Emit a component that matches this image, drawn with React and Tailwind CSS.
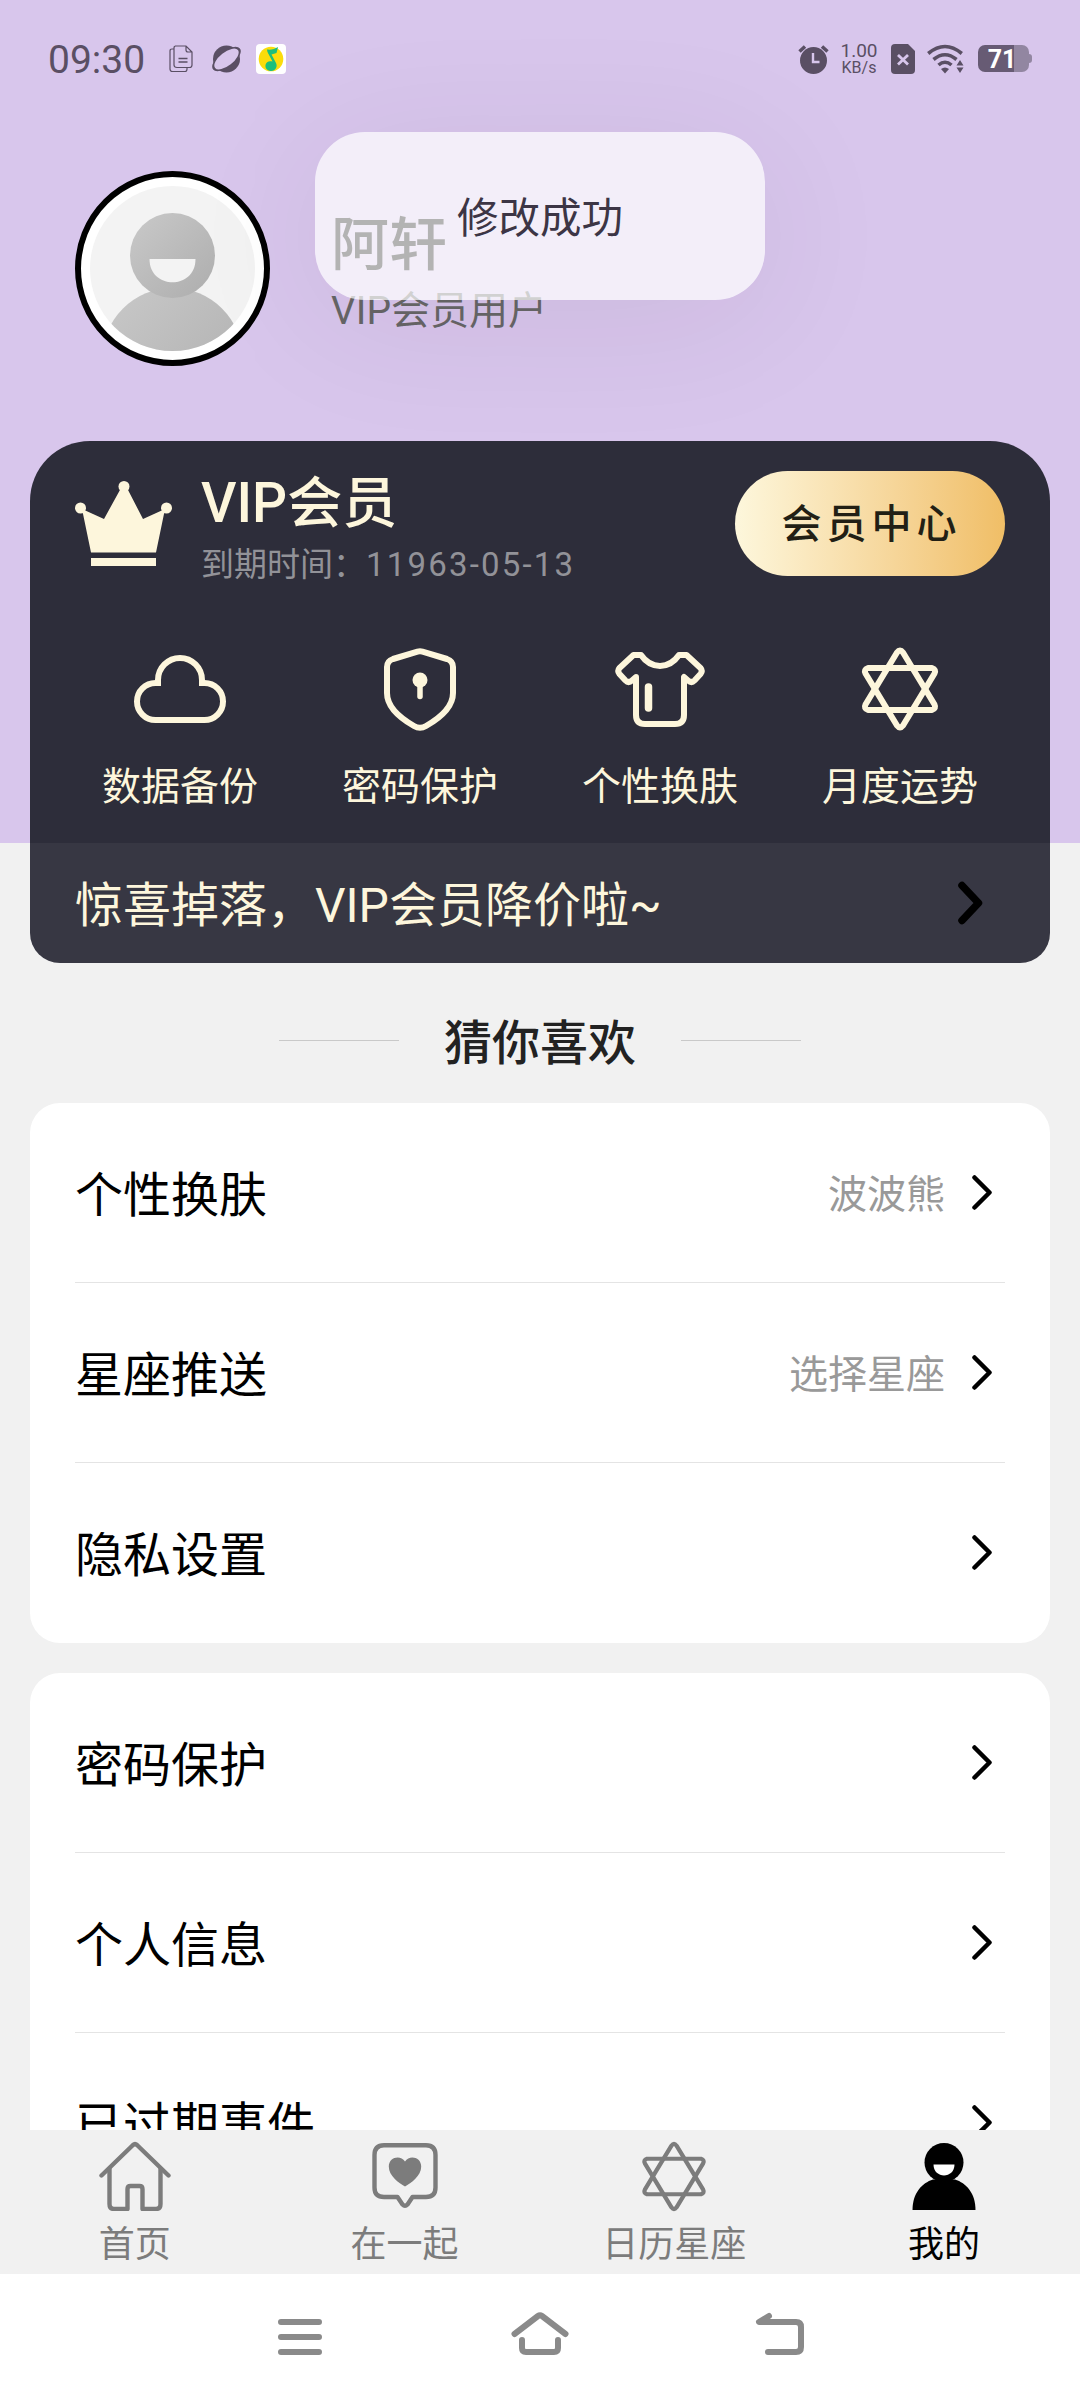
const CREAM = '#fdf6dc';

function CloudIcon() {
  return (
    <svg width="92" height="84" viewBox="0 0 92 84" fill="none" stroke={CREAM} strokeWidth="6">
      <path d="M27 36H21.500a18.500 18.500 0 0 0 0 37h49a18.500 18.500 0 0 0 0-37H65" />
      <path d="M24 39V33a22 22 0 0 1 44 0v6" />
    </svg>
  );
}

function ShieldIcon() {
  return (
    <svg width="74" height="84" viewBox="0 0 74 84" fill="none" stroke={CREAM} strokeWidth="6" strokeLinejoin="round" strokeLinecap="round">
      <path d="M34.500 4.700Q37 4 39.500 4.700L64 12Q70 14 70 20V46C70 60 57 71 43 79Q37 82.500 31 79C17 71 4 60 4 46V20Q4 14 10 12Z" />
      <circle cx="37" cy="33" r="7.500" fill={CREAM} stroke="none" />
      <path d="M37 34V49.500" strokeWidth="5.500" />
    </svg>
  );
}

function ShirtIcon() {
  return (
    <svg width="90" height="84" viewBox="0 0 90 84" fill="none" stroke={CREAM} strokeWidth="6" strokeLinejoin="round" strokeLinecap="round">
      <path d="M21 30L17 33.500Q13.500 36.500 10.500 33.500L4.500 27Q2 24 4.500 21L18.500 8H26C36 22.500 54 22.500 64 8H71.500L85.500 21Q88 24 85.500 27L79.500 33.500Q76.500 36.500 73 33.500L69 30V68Q69 77 60 77H30Q21 77 21 68Z" />
      <path d="M33.500 40V61" strokeWidth="7.500" />
    </svg>
  );
}

function StarIcon({ width, height, color, stroke }) {
  return (
    <svg width={width} height={height} viewBox="0 0 78 84" fill="none" stroke={color} strokeWidth={stroke} strokeLinejoin="round">
      <path d="M36 5.500Q39 1.500 42 5.500L73.500 57.500Q75.500 61.500 71 63H7Q2.500 61.500 4.500 57.500Z" />
      <path d="M36 78.500Q39 82.500 42 78.500L73.500 26.500Q75.500 22.500 71 21H7Q2.500 22.500 4.500 26.500Z" />
    </svg>
  );
}

function CrownIcon() {
  return (
    <svg width="97" height="86" viewBox="0 0 97 86" fill={CREAM}>
      <circle cx="49" cy="5.500" r="5.500" />
      <circle cx="5.500" cy="27" r="5.500" />
      <circle cx="91.500" cy="27" r="5.500" />
      <path d="M7 28L29 38L45.500 8H52.500L68 38L90 28L81 71.500H16Z" />
      <path d="M16 77H81V85H16Z" />
    </svg>
  );
}

function Chevron({ bold }) {
  return bold ? (
    <svg width="27" height="44" viewBox="0 0 27 44" fill="none" stroke="#000" strokeWidth="7.500" strokeLinecap="round" strokeLinejoin="round">
      <path d="M5 4.500L21.500 22L5 39.500" />
    </svg>
  ) : (
    <svg width="20" height="36" viewBox="0 0 20 36" fill="none" stroke="#000" strokeWidth="4.500" strokeLinecap="round" strokeLinejoin="round">
      <path d="M2.500 2.500L17.500 17.500L2.500 32.500" />
    </svg>
  );
}

function HomeIcon() {
  return (
    <svg width="72" height="70" viewBox="0 0 72 70" fill="none" stroke="#7c7c7c" strokeWidth="4.400" strokeLinecap="round" strokeLinejoin="round">
      <path d="M2.500 34.500L34 4Q36 2.200 38 4L69.500 34.500" />
      <path d="M10.500 28V63Q10.500 68 15 68H28.500V48Q28.500 45 31.500 45H40.500Q43.500 45 43.500 48V68H57Q61.500 68 61.500 63V28" />
    </svg>
  );
}

function TogetherIcon() {
  return (
    <svg width="68" height="70" viewBox="0 0 68 70" fill="none" stroke="#7c7c7c" strokeWidth="4.400" strokeLinejoin="round">
      <path d="M13 4.200H55Q64.500 4.200 64.500 14V46.500Q64.500 56 55 56H41.500L36.500 63.500Q34 66 31.500 63.500L26.500 56H13Q3.500 56 3.500 46.500V14Q3.500 4.200 13 4.200Z" />
      <path d="M34 45.500C28 42 17.800 35 17.800 25.500C17.800 16 29.500 13.500 34 20.500C38.500 13.500 50.200 16 50.200 25.500C50.200 35 40 42 34 45.500Z" fill="#7c7c7c" stroke="none" />
    </svg>
  );
}

function MeIcon() {
  return (
    <svg width="64" height="70" viewBox="0 0 64 70">
      <path d="M.5 69C.5 52 10 42 21 38.500H43C54 42 63.500 52 63.500 69Z" />
      <circle cx="32" cy="21.500" r="19.500" />
      <path d="M21.500 23.500H42.500C42.500 38 21.500 38 21.500 23.500Z" fill="#fff" />
    </svg>
  );
}

function Avatar() {
  return (
    <div className="h-[195px] w-[195px] rounded-full border-[6px] border-black bg-white p-[9px]">
      <svg width="165" height="165" viewBox="0 0 165 165">
        <defs>
          <linearGradient id="face" x1="0" y1="0" x2="1" y2="1">
            <stop offset="0" stopColor="#c9c9c9" />
            <stop offset="1" stopColor="#adadad" />
          </linearGradient>
          <clipPath id="round">
            <circle cx="82.500" cy="82.500" r="82.500" />
          </clipPath>
        </defs>
        <circle cx="82.500" cy="82.500" r="82.500" fill="#f3f3f3" />
        <g clipPath="url(#round)">
          <circle cx="82.500" cy="172" r="70" fill="url(#face)" />
          <circle cx="82.500" cy="69.500" r="42.500" fill="url(#face)" />
          <path d="M59.500 73H105.500C105.500 104 59.500 104 59.500 73Z" fill="#f3f3f3" />
        </g>
      </svg>
    </div>
  );
}

function StatusBar() {
  return (
    <div className="flex h-[117px] items-center justify-between pl-[48px] pr-[48px] text-[#5a4f64]">
      <div className="flex items-center">
        <span className="w-[121px] pt-[4px] text-[39px] leading-none font-[Roboto]">09:30</span>
        <svg width="24" height="28" viewBox="0 0 24 28" fill="none" stroke="#5a4f64" strokeWidth="1.200">
          <path d="M6 1H17L23 7V20Q23 22.500 20.500 22.500H8Q5 22.500 5 20V3Q5 1 7 1M17 1V5Q17 7 19 7H23" />
          <path d="M5 4H3Q1 4 1 6V24Q1 26.500 3.500 26.500H16Q18 26.500 18 24V22.500" />
          <path d="M9.500 13.500H18.500M9.500 17H18.500" strokeWidth="1.600" />
        </svg>
        <svg className="ml-[18px]" width="31" height="30" viewBox="0 0 31 30">
          <circle cx="15.500" cy="15" r="13.500" fill="#5a4f64" />
          <ellipse cx="15.500" cy="15" rx="17" ry="8" transform="rotate(-38 15.500 15)" fill="#5a4f64" />
          <ellipse cx="15.500" cy="15" rx="14.500" ry="6.800" transform="rotate(-38 15.500 15)" fill="#d8c6ec" />
        </svg>
        <svg className="ml-[14px]" width="30" height="30" viewBox="0 0 30 30">
          <rect width="30" height="30" rx="4" fill="#fff" />
          <circle cx="15" cy="15" r="12.300" fill="#fbdc0b" />
          <path d="M11 5.500C15 6 19 5 22 3L20.500 9L15.500 10.500L20 19C22 23 19 27 15.500 27C11.500 27 9 24.500 9.500 21C10 18 13 16.500 16.500 17.500L12.500 10C11.500 8.500 11 7 11 5.500Z" fill="#1cbf7b" />
        </svg>
      </div>
      <div className="flex items-center">
        <svg width="31" height="30" viewBox="0 0 31 30">
          <circle cx="15.500" cy="16.500" r="13.500" fill="#5a4f64" />
          <path d="M1.500 7.500L7 2.500M29.500 7.500L24 2.500" stroke="#5a4f64" strokeWidth="3.500" />
          <path d="M15 9V18H21.500" fill="none" stroke="#d8c6ec" strokeWidth="2.400" />
        </svg>
        <div className="ml-[11px] flex w-[38px] flex-col items-center font-[Roboto]">
          <span className="text-[19px] leading-[17px]">1.00</span>
          <span className="text-[16px] leading-[17px]">KB/s</span>
        </div>
        <svg className="ml-[13px]" width="24" height="30" viewBox="0 0 24 30">
          <path d="M4 0H17L24 7V26Q24 30 20 30H4Q0 30 0 26V4Q0 0 4 0Z" fill="#5a4f64" />
          <path d="M7 11L17 20.500M17 11L7 20.500" stroke="#d8c6ec" strokeWidth="2.800" />
        </svg>
        <svg className="ml-[12px]" width="37" height="30" viewBox="0 0 37 30" fill="none" stroke="#5a4f64" strokeWidth="3.600">
          <path d="M1.200 9.500Q18 -4.500 34.800 9.500M6.500 15.500Q18 6 29.500 15.500M11.500 21Q18 15.500 24.500 21" />
          <path d="M14 25Q18 22 22 25L18 29.500Z" fill="#5a4f64" stroke="none" />
          <path d="M29.500 21.500L33 16L36.500 21.500ZM29.500 23.500H36.500L33 29Z" fill="#5a4f64" stroke="none" />
        </svg>
        <div className="ml-[14px] flex items-center">
          <div className="flex h-[27px] w-[51px] items-center justify-center rounded-[7px] bg-[linear-gradient(90deg,#675b74_71%,#9286a1_71%)] pr-[3px] pt-[2px] text-[25px] leading-none font-bold text-white font-[Roboto]">71</div>
          <div className="h-[9px] w-[3px] rounded-r-[3px] bg-[#9286a1]" />
        </div>
      </div>
    </div>
  );
}

const features = [
  { label: '数据备份', icon: <CloudIcon /> },
  { label: '密码保护', icon: <ShieldIcon /> },
  { label: '个性换肤', icon: <ShirtIcon /> },
  { label: '月度运势', icon: <StarIcon width={78} height={84} color={CREAM} stroke={6} /> },
];

const groups = [
  [
    { label: '个性换肤', value: '波波熊' },
    { label: '星座推送', value: '选择星座' },
    { label: '隐私设置' },
  ],
  [{ label: '密码保护' }, { label: '个人信息' }, { label: '已过期事件' }],
];

const tabs = [
  { label: '首页', icon: <HomeIcon /> },
  { label: '在一起', icon: <TogetherIcon /> },
  { label: '日历星座', icon: <StarIcon width={66} height={71} color="#7c7c7c" stroke={5} /> },
  { label: '我的', icon: <MeIcon />, active: true },
];

function SettingsGroup({ rows }) {
  return (
    <div className="mx-[30px] shrink-0 rounded-[30px] bg-white px-[45px]">
      {rows.map((row, i) => (
        <div
          key={row.label}
          className={`flex h-[180px] items-center pr-[13px] ${i < rows.length - 1 ? 'border-b border-[#e4e4e4]' : ''}`}
        >
          <span className="flex-1 pt-[6px] text-[48px] leading-none text-black">{row.label}</span>
          {row.value && <span className="mr-[27px] pt-[6px] text-[39px] leading-none text-[#999]">{row.value}</span>}
          <Chevron />
        </div>
      ))}
    </div>
  );
}

export default function App() {
  return (
    <div className="relative flex h-[2400px] w-[1080px] flex-col overflow-hidden bg-[#f1f1f1] font-[Roboto,'Noto_Sans_CJK_SC',sans-serif]">
      <div className="flex h-[843px] shrink-0 flex-col bg-[#d8c6ec]">
        <StatusBar />
        <div className="flex h-[324px] pl-[75px] pt-[54px]">
          <Avatar />
          <div className="ml-[61px] pt-[44px]">
            <div className="text-[58px] leading-[60px] font-medium text-black">阿轩</div>
            <div className="mt-[15px] text-[39px] leading-[42px] text-[#666]">VIP会员用户</div>
          </div>
        </div>

        <div className="mx-[30px] flex-1 rounded-t-[60px] bg-[#2d2d3a]">
          <div className="flex pl-[45px] pr-[45px] pt-[30px]">
            <div className="pt-[10px]">
              <CrownIcon />
            </div>
            <div className="ml-[29px] flex-1 pt-[2px]">
              <div className="text-[55px] leading-[60px] font-medium text-[#fdf6dc]">VIP会员</div>
              <div className="mt-[14px] flex text-[33px] leading-[36px] text-[#929298]">
                到期时间：<span className="tracking-[2.2px]">11963-05-13</span>
              </div>
            </div>
            <button className="h-[105px] w-[270px] rounded-full bg-linear-to-r from-[#fdf7dc] to-[#f0be66] pl-[3px] pt-[2px] text-[40px] leading-none font-medium tracking-[5px] text-[#221f15]">
              会员中心
            </button>
          </div>
          <div className="mt-[64px] grid grid-cols-4 pl-[30px] pr-[30px]">
            {features.map((f) => (
              <div key={f.label} className="flex flex-col items-center">
                {f.icon}
                <span className="mt-[35px] text-[39px] leading-[42px] text-[#fdf6dc]">{f.label}</span>
              </div>
            ))}
          </div>
        </div>
      </div>

      <div className="mx-[30px] flex h-[120px] shrink-0 items-center justify-between rounded-b-[30px] bg-[#373743] pl-[45px] pr-[66px]">
        <span className="pt-[5px] text-[48px] leading-none text-[#fdf6dc]">惊喜掉落，VIP会员降价啦~</span>
        <Chevron bold />
      </div>

      <div className="flex h-[140px] shrink-0 items-center justify-center gap-[45px] pt-[15px]">
        <div className="h-px w-[120px] bg-[#c9c9c9]" />
        <span className="pt-[6px] text-[48px] leading-none font-medium text-[#222]">猜你喜欢</span>
        <div className="h-px w-[120px] bg-[#c9c9c9]" />
      </div>

      <div className="flex h-[1027px] shrink-0 flex-col gap-[30px] overflow-hidden">
        {groups.map((rows) => (
          <SettingsGroup key={rows[0].label} rows={rows} />
        ))}
      </div>

      <div className="grid h-[144px] shrink-0 grid-cols-4 bg-[#f1f1f1] pr-[1px] pt-[11px]">
        {tabs.map((tab) => (
          <div key={tab.label} className={`flex flex-col items-center ${tab.active ? 'text-black' : 'text-[#7c7c7c]'}`}>
            <div className="flex h-[70px] items-center">{tab.icon}</div>
            <span className="mt-[14px] text-[36px] leading-[40px]">{tab.label}</span>
          </div>
        ))}
      </div>

      <div className="flex flex-1 justify-center gap-[180px] bg-white pt-[33px]">
        <svg width="60" height="60" viewBox="0 0 60 60" fill="none" stroke="#8a8a8a" strokeWidth="6" strokeLinecap="round">
          <path d="M11 15H49M11 30H49M11 45H49" />
        </svg>
        <svg width="60" height="60" viewBox="0 0 60 60" fill="none" stroke="#8a8a8a" strokeWidth="6" strokeLinecap="round" strokeLinejoin="round">
          <path d="M4.500 27L28 9Q30 7.500 32 9L55.500 27M12 33V41Q12 45 16 45H44Q48 45 48 41V33" />
        </svg>
        <svg width="60" height="60" viewBox="0 0 60 60" fill="none" stroke="#8a8a8a" strokeWidth="6" strokeLinecap="round" strokeLinejoin="round">
          <path d="M19 9L9 15H46Q51 15 51 20V40Q51 45 46 45H18" />
        </svg>
      </div>

      <div className="absolute left-[315px] top-[132px] flex h-[168px] w-[450px] items-center justify-center rounded-[50px] bg-white/70 pt-[6px] text-[41.500px] leading-none text-[#3c3545] shadow-[0_20px_140px_rgba(60,30,60,0.08)]">
        修改成功
      </div>
    </div>
  );
}
